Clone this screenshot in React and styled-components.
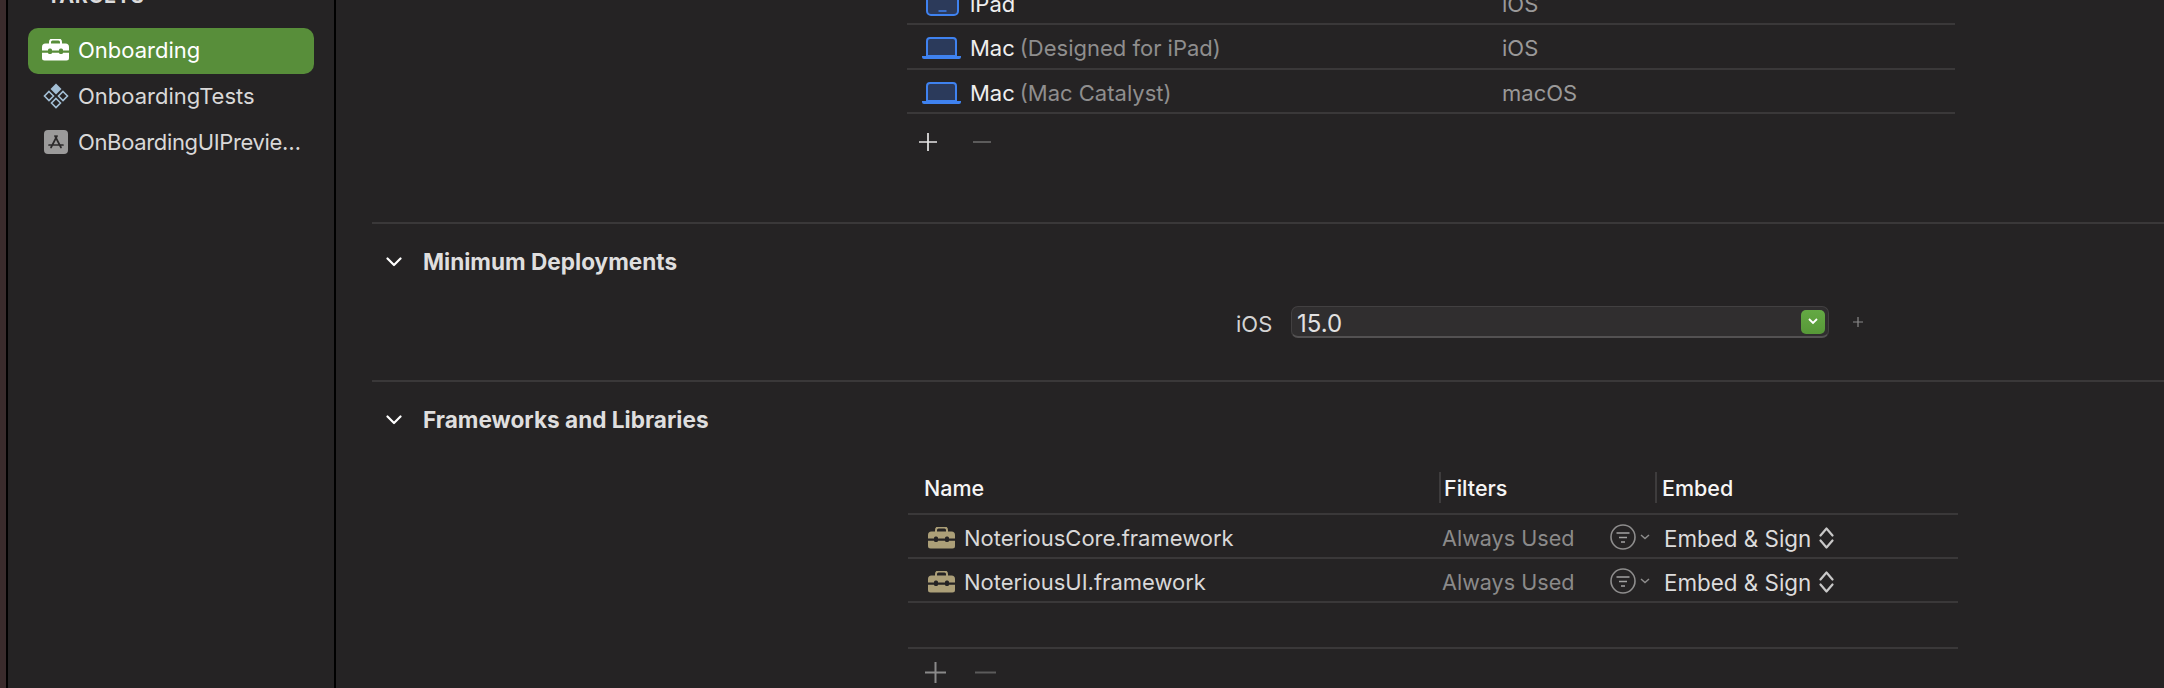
import styled, { createGlobalStyle } from "styled-components";

const GlobalStyle = createGlobalStyle`
  html, body { margin: 0; padding: 0; background: #252324; }
  body { font-family: "Inter", "Liberation Sans", sans-serif; overflow: hidden; }
`;

const Window = styled.div`
  display: flex;
  width: 2164px;
  height: 688px;
  overflow: hidden;
  background: #252324;
`;

const Edge = styled.div`
  width: 6px;
  flex: none;
  background: #3a2b2c;
  border-right: 2px solid #000;
`;

const Sidebar = styled.aside`
  width: 286px;
  flex: none;
  padding: 0 20px;
  background: #252324;
  border-right: 2px solid #000;
`;

const SidebarLabel = styled.div`
  height: 44px;
  margin-top: -16px;
  padding-left: 19px;
  font-size: 20px;
  line-height: 24px;
  font-weight: 700;
  letter-spacing: 0.6px;
  color: #dcdbdb;
`;

const SidebarRow = styled.div`
  display: flex;
  align-items: center;
  gap: 9px;
  height: 46px;
  box-sizing: border-box;
  padding: 0 0 2px 14px;
  border-radius: 10px;
  background: ${(p) => (p.$active ? "#588e3a" : "transparent")};
  color: ${(p) => (p.$active ? "#ffffff" : "#d9d8d8")};
  font-size: 22px;
  white-space: nowrap;
`;

const SidebarIcon = styled.span`
  display: flex;
  justify-content: center;
  width: 27px;
  flex: none;
`;

const Truncated = styled.span`
  letter-spacing: -0.35px;
`;

const Main = styled.main`
  flex: 1;
  min-width: 0;
  padding-left: 36px;
`;

const Section = styled.section`
  display: flow-root;
  height: ${(p) => p.$height}px;
  border-bottom: 2px solid #3a3839;
  box-sizing: border-box;
`;

const SectionHead = styled.div`
  display: flex;
  align-items: center;
  gap: 21px;
  height: 24px;
  padding: 26px 0 0 14px;
  font-size: 22.6px;
  line-height: 24px;
  font-weight: 700;
  color: #dfdede;
`;

const Chevron = styled.svg`
  width: 16px;
  height: 10px;
  flex: none;
`;

const PlatformTable = styled.div`
  width: 1048px;
  margin: -19px 0 0 535px;
`;

const PlatformRow = styled.div`
  display: flex;
  align-items: center;
  height: 44.33px;
  box-sizing: border-box;
  padding-top: 4px;
  border-bottom: 2px solid #3a3839;
  font-size: 22px;
  color: #efeeee;
`;

const PlatformName = styled.div`
  width: 580px;
  margin-left: 15px;
  display: flex;
  align-items: center;
  gap: 8px;
  flex: none;
  white-space: nowrap;
`;

const IconSlot = styled.span`
  display: flex;
  justify-content: center;
  width: 40px;
  flex: none;
`;

const Dim = styled.span`
  color: #8f8e8e;
  margin-left: 5px;
`;

const Kind = styled.div`
  color: #9a9999;
`;

const AddRemove = styled.div`
  display: flex;
  align-items: center;
  gap: ${(p) => p.$gap}px;
  height: 22px;
  margin: ${(p) => p.$top}px 0 0 ${(p) => p.$left}px;
`;

const DeployRow = styled.div`
  display: flex;
  align-items: center;
  margin: 32px 0 0 864px;
`;

const DeployLabel = styled.div`
  width: 55px;
  padding-top: 3px;
  font-size: 22px;
  color: #d4d3d3;
`;

const VersionField = styled.div`
  display: flex;
  align-items: center;
  justify-content: space-between;
  width: 538px;
  height: 32px;
  box-sizing: border-box;
  padding: 0 3px 0 5px;
  border: 1px solid #424041;
  border-bottom: 2px solid #535152;
  border-radius: 7px;
  background: #302e2f;
  font-size: 24px;
  color: #e2e1e1;
`;

const VersionText = styled.span`
  margin-top: 3px;
`;

const GreenButton = styled.span`
  display: flex;
  align-items: center;
  justify-content: center;
  width: 24px;
  height: 24px;
  border-radius: 5px;
  background: linear-gradient(#64a944, #579838);
`;

const SmallPlus = styled.svg`
  width: 10px;
  height: 10px;
  margin-left: 24px;
`;

const FrameworkTable = styled.div`
  width: 1050px;
  margin: 34px 0 0 536px;
`;

const TableHead = styled.div`
  display: grid;
  grid-template-columns: 531px 216px 1fr;
  align-items: center;
  height: 49px;
  box-sizing: border-box;
  padding-bottom: 4px;
  border-bottom: 2px solid #3a3839;
  font-size: 21.5px;
  font-weight: 500;
  color: #f6f5f5;
`;

const HeadCell = styled.div`
  display: flex;
  align-items: center;
  height: 31px;
  box-sizing: border-box;
  padding-left: ${(p) => p.$pad}px;
  border-left: ${(p) => (p.$rule ? "2px solid #3e3c3d" : "none")};
`;

const FrameworkRow = styled.div`
  display: grid;
  grid-template-columns: 531px 216px 1fr;
  align-items: center;
  height: 44px;
  box-sizing: border-box;
  padding-top: 4px;
  border-bottom: 2px solid #3a3839;
  font-size: 22px;
`;

const FrameworkName = styled.div`
  display: flex;
  align-items: center;
  gap: 9px;
  padding-left: 20px;
  color: #d9d8d8;
`;

const FilterCell = styled.div`
  display: flex;
  align-items: center;
  padding-left: 3px;
  color: #8b8a8a;
  font-size: 21.6px;
  white-space: nowrap;
`;

const FilterText = styled.span`
  width: 168px;
  flex: none;
`;

const FilterGlyph = styled.svg`
  flex: none;
  margin-top: -2px;
`;

const EmbedCell = styled.div`
  display: flex;
  align-items: center;
  gap: 8px;
  padding-left: 9px;
  color: #dddcdc;
  font-size: 22.4px;
  white-space: nowrap;
`;

const EmptyRow = styled.div`
  height: 46px;
  box-sizing: border-box;
  border-bottom: 2px solid #3a3839;
`;

const Toolbox = ({ color = "#fff", hole = "#588e3a" }) => (
  <svg width="27" height="22" viewBox="0 0 27 22">
    <path d="M8 5V3a2.5 2.5 0 0 1 2.5-2.500h6A2.500 2.500 0 0 1 19 3v2" fill="none" stroke={color} strokeWidth="2" />
    <path d="M3.500 4.500h20A3.500 3.500 0 0 1 27 8v4H0V8a3.500 3.500 0 0 1 3.500-3.500z" fill={color} />
    <path d="M0 13.500h27V19a2.500 2.500 0 0 1-2.500 2.500h-22A2.500 2.500 0 0 1 0 19z" fill={color} />
    <rect x="0" y="11.500" width="27" height="2" fill={hole} />
    <rect x="6" y="9.500" width="4" height="5.500" rx="1.500" fill={hole} />
    <rect x="17" y="9.500" width="4" height="5.500" rx="1.500" fill={hole} />
  </svg>
);

const TestBundle = () => (
  <svg width="26" height="26" viewBox="0 0 26 26">
    <path d="M13 0.500l5.500 5.500-5.500 5.500L7.500 6z" fill="#a3bfd5" />
    <g fill="none" stroke="#a3bfd5" strokeWidth="1.600">
      <path d="M6 8.500l4.500 4.500L6 17.500 1.500 13z" />
      <path d="M20 8.500l4.500 4.500-4.500 4.500-4.500-4.500z" />
      <path d="M13 15.500l4.500 4.500-4.500 4.500L8.500 20z" />
    </g>
  </svg>
);

const AppStoreIcon = () => (
  <svg width="24" height="24" viewBox="0 0 24 24">
    <rect width="24" height="24" rx="4" fill="#9b9a9a" />
    <g fill="none" stroke="#2c2a2b" strokeWidth="1.700" strokeLinecap="round">
      <path d="M13 6L7 17.500M11 6l6 11.500M5 15h14" />
    </g>
  </svg>
);

const TabletIcon = () => (
  <svg width="33" height="24" viewBox="0 0 33 24">
    <rect x="1" y="1" width="31" height="22" rx="4" fill="#2c3a5a" stroke="#3f82f0" strokeWidth="2" />
    <path d="M12.500 19h8" stroke="#3f82f0" strokeWidth="1.500" />
  </svg>
);

const LaptopIcon = () => (
  <svg width="40" height="22" viewBox="0 0 40 22">
    <path d="M5 19V4a3 3 0 0 1 3-3h23a3 3 0 0 1 3 3v15z" fill="#2b3a5b" stroke="#3f82f0" strokeWidth="2" />
    <path d="M0 19h39v1a2 2 0 0 1-2 2H2a2 2 0 0 1-2-2z" fill="#3f82f0" />
  </svg>
);

const Plus = ({ size, color }) => (
  <svg width={size} height={size} viewBox="0 0 20 20">
    <path d="M10 0v20M0 10h20" stroke={color} strokeWidth="1.900" />
  </svg>
);

const Minus = ({ size, color }) => (
  <svg width={size} height={size} viewBox="0 0 20 20">
    <path d="M0 10h20" stroke={color} strokeWidth="1.900" />
  </svg>
);

const Caret = () => (
  <Chevron viewBox="0 0 16 10">
    <path d="M1.500 1.500L8 8l6.500-6.500" fill="none" stroke="#fff" strokeWidth="2.200" strokeLinecap="round" strokeLinejoin="round" />
  </Chevron>
);

const FilterIcon = () => (
  <FilterGlyph width="40" height="26" viewBox="0 0 40 26">
    <circle cx="13" cy="13" r="12" fill="none" stroke="#8e8d8d" strokeWidth="1.600" />
    <path d="M6.500 9h13M9 13.500h8M11 18h4" stroke="#a3a2a2" strokeWidth="1.700" />
    <path d="M31 11l4 3.500 4-3.500" fill="none" stroke="#8e8d8d" strokeWidth="1.500" />
  </FilterGlyph>
);

const UpDown = () => (
  <svg width="15" height="22" viewBox="0 0 15 22">
    <path d="M1.500 8.500L7.500 1.500l6 7M1.500 13.500l6 7 6-7" fill="none" stroke="#c9c8c8" strokeWidth="2.200" strokeLinecap="round" strokeLinejoin="round" />
  </svg>
);

const platforms = [
  { name: "iPad", note: "", kind: "iOS", tablet: true },
  { name: "Mac", note: "(Designed for iPad)", kind: "iOS" },
  { name: "Mac", note: "(Mac Catalyst)", kind: "macOS" },
];

const frameworks = ["NoteriousCore.framework", "NoteriousUI.framework"];

export default function App() {
  return (
    <Window>
      <GlobalStyle />
      <Edge />
      <Sidebar>
        <SidebarLabel>TARGETS</SidebarLabel>
        <SidebarRow $active>
          <SidebarIcon><Toolbox /></SidebarIcon>
          Onboarding
        </SidebarRow>
        <SidebarRow>
          <SidebarIcon><TestBundle /></SidebarIcon>
          OnboardingTests
        </SidebarRow>
        <SidebarRow>
          <SidebarIcon><AppStoreIcon /></SidebarIcon>
          <Truncated>OnBoardingUIPrevie…</Truncated>
        </SidebarRow>
      </Sidebar>
      <Main>
        <Section $height={224}>
          <PlatformTable>
            {platforms.map((p, i) => (
              <PlatformRow key={i}>
                <PlatformName>
                  <IconSlot>{p.tablet ? <TabletIcon /> : <LaptopIcon />}</IconSlot>
                  <span>
                    {p.name}
                    {p.note && <Dim>{p.note}</Dim>}
                  </span>
                </PlatformName>
                <Kind>{p.kind}</Kind>
              </PlatformRow>
            ))}
            <AddRemove $gap={36} $top={17} $left={12}>
              <Plus size={18} color="#e6e5e5" />
              <Minus size={18} color="#666565" />
            </AddRemove>
          </PlatformTable>
        </Section>
        <Section $height={158}>
          <SectionHead>
            <Caret />
            Minimum Deployments
          </SectionHead>
          <DeployRow>
            <DeployLabel>iOS</DeployLabel>
            <VersionField>
              <VersionText>15.0</VersionText>
              <GreenButton>
                <svg width="10" height="7" viewBox="0 0 10 7">
                  <path d="M1 1l4 4 4-4" fill="none" stroke="#fff" strokeWidth="1.800" />
                </svg>
              </GreenButton>
            </VersionField>
            <SmallPlus viewBox="0 0 20 20">
              <path d="M10 0v20M0 10h20" stroke="#8a8989" strokeWidth="2.400" />
            </SmallPlus>
          </DeployRow>
        </Section>
        <SectionHead>
          <Caret />
          Frameworks and Libraries
        </SectionHead>
        <FrameworkTable>
          <TableHead>
            <HeadCell $pad={16}>Name</HeadCell>
            <HeadCell $rule $pad={3}>Filters</HeadCell>
            <HeadCell $rule $pad={5}>Embed</HeadCell>
          </TableHead>
          {frameworks.map((name) => (
            <FrameworkRow key={name}>
              <FrameworkName>
                <Toolbox color="#ac9f78" hole="#252324" />
                {name}
              </FrameworkName>
              <FilterCell>
                <FilterText>Always Used</FilterText>
                <FilterIcon />
              </FilterCell>
              <EmbedCell>
                Embed &amp; Sign
                <UpDown />
              </EmbedCell>
            </FrameworkRow>
          ))}
          <EmptyRow />
          <AddRemove $gap={29} $top={12} $left={17}>
            <Plus size={21} color="#8a8989" />
            <Minus size={21} color="#5c5b5b" />
          </AddRemove>
        </FrameworkTable>
      </Main>
    </Window>
  );
}
